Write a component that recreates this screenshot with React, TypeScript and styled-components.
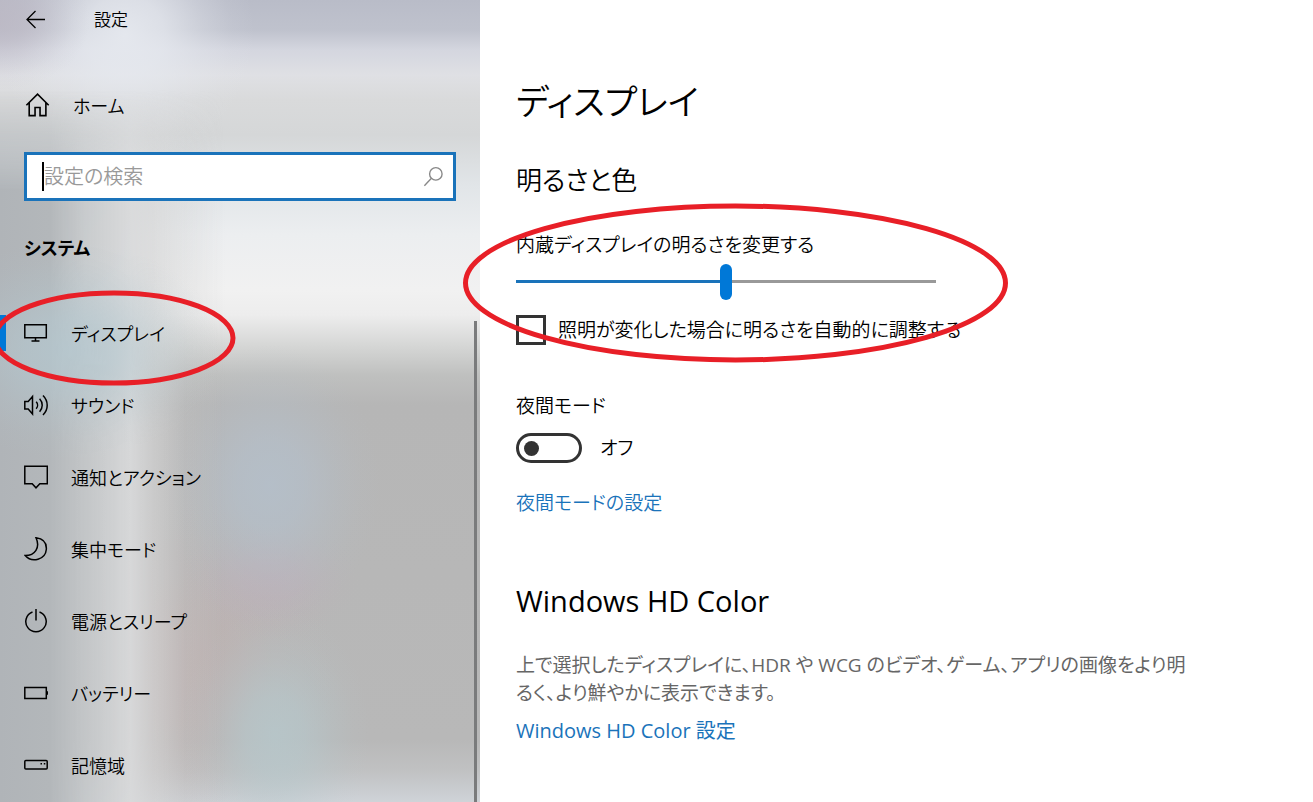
import React from "react";
import styled, { createGlobalStyle } from "styled-components";

const GlobalStyle = createGlobalStyle`
  *, *::before, *::after { box-sizing: border-box; }
  body {
    margin: 0;
    background: #fff;
    color: #000;
    font-family: "Open Sans", "Noto Sans CJK JP", sans-serif;
    font-size: 19px;
    font-weight: 350;
    line-height: 28px;
    font-feature-settings: "palt";
  }
  h1, h2, p { margin: 0; font-weight: inherit; }
  button, input { font: inherit; font-feature-settings: inherit; color: inherit; }
`;

const Window = styled.div`
  position: relative;
  display: flex;
  min-height: 100vh;
  overflow: hidden;
`;

const glow = (shape: string, rgb: string, alpha: number) =>
  `radial-gradient(ellipse ${shape}, rgba(${rgb}, ${alpha}), rgba(${rgb}, ${alpha * 0.8}) 30%, rgba(${rgb}, ${alpha * 0.35}) 60%, rgba(${rgb}, ${alpha * 0.1}) 82%, rgba(${rgb}, 0))`;

const Sidebar = styled.aside`
  position: relative;
  isolation: isolate;
  flex: 0 0 480px;
  display: flex;
  flex-direction: column;
  background:
    ${glow("110px 140px at 270px 485px", "180, 192, 204", 0.8)},
    ${glow("90px 60px at 270px 580px", "190, 174, 184", 0.6)},
    ${glow("95px 130px at 275px 735px", "182, 200, 204", 0.8)},
    ${glow("140px 170px at 195px 670px", "190, 177, 176", 0.8)},
    ${glow("90px 70px at 0px 20px", "188, 184, 196", 0.8)},
    ${glow("130px 130px at 125px 35px", "230, 233, 239", 0.95)},
    linear-gradient(
      #b9bcc8 0, #bfc2cd 30px, #d4d6df 50px, #dfe0e4 75px, #d9dadb 100px,
      #d5d7d8 135px, #e1e5e8 185px, #eceef0 235px, #f1f1f1 290px, #ededed 315px,
      #d6d7d6 345px, #bfc0bf 375px, #b6b6b6 405px, #b8b8b8 740px, #c0c1c2 770px, #cfd3d8 802px
    );

  &::before {
    content: "";
    position: absolute;
    inset: 0;
    z-index: -1;
    background:
      ${glow("150px 110px at 70px 350px", "180, 200, 208", 0.75)},
      linear-gradient(90deg, #b0b4b8 0, #b3b7ba 50px, rgba(196, 199, 201, 0.9) 85px, rgba(216, 217, 218, 0.95) 130px, rgba(212, 212, 212, 0.65) 155px, rgba(200, 200, 200, 0.25) 185px, rgba(195, 195, 195, 0) 225px);
    mask-image: linear-gradient(transparent 90px, #000 190px);
  }
`;

const TitleBar = styled.header`
  display: flex;
  align-items: center;
  height: 40px;
  padding-left: 24px;
  gap: 46px;
  font-size: 17px;
`;

const IconButton = styled.button`
  display: flex;
  padding: 0;
  border: 0;
  background: none;
`;

const NavLink = styled.a<{ $current?: boolean }>`
  position: relative;
  display: flex;
  align-items: center;
  gap: 23px;
  height: 72px;
  padding-left: 24px;
  color: #000;
  font-size: 18px;
  text-decoration: none;

  &::before {
    content: "";
    position: absolute;
    left: 0;
    width: 6px;
    height: 36px;
    background: ${(p) => (p.$current ? "#0078d7" : "transparent")};
  }
`;

const NavLabel = styled.span`
  padding-top: 2px;
`;

const HomeArea = styled.div`
  padding: 29px 0 11px;
`;

const SearchBox = styled.label`
  display: flex;
  align-items: center;
  height: 49px;
  margin: 0 24px;
  padding: 0 8px 0 15px;
  border: 3px solid #1a73ba;
  background: #fff;
`;

const Caret = styled.span`
  flex: none;
  width: 2px;
  height: 29px;
  background: #000;
`;

const SearchInput = styled.input`
  flex: 1;
  min-width: 0;
  height: 28px;
  padding: 0;
  border: 0;
  outline: 0;
  background: none;
  font-size: 20px;

  &::placeholder { color: #999; opacity: 1; }
`;

const GroupTitle = styled.h2`
  padding: 33px 24px 35px;
  font-size: 18px;
  font-weight: 700;
`;

const NavList = styled.nav`
  display: flex;
  flex-direction: column;
`;

const ScrollThumb = styled.div`
  position: absolute;
  top: 321px;
  right: 3px;
  bottom: 0;
  width: 3px;
  background: #7a7b7c;
`;

const Main = styled.main`
  flex: 1;
  min-width: 0;
  padding: 72px 36px 36px;
`;

const PageTitle = styled.h1`
  font-size: 35px;
  line-height: 60px;
`;

const SectionTitle = styled.h2<{ $top: number; $latin?: boolean }>`
  padding-top: ${(p) => p.$top}px;
  font-size: ${(p) => (p.$latin ? 29 : 26)}px;
  font-weight: ${(p) => (p.$latin ? 400 : 350)};
  line-height: 40px;
`;

const Field = styled.div<{ $top: number }>`
  display: flex;
  flex-direction: column;
  align-items: flex-start;
  padding-top: ${(p) => p.$top}px;
`;

const Slider = styled.input`
  appearance: none;
  width: 420px;
  max-width: 100%;
  height: 36px;
  margin: 5px 0 0;
  background: linear-gradient(90deg, #1a73ba 50%, #999 50%) 0 16px / 100% 3px no-repeat;

  &::-webkit-slider-thumb {
    appearance: none;
    width: 12px;
    height: 36px;
    border-radius: 6px;
    background: #0078d7;
  }
`;

const CheckRow = styled.div`
  display: flex;
  align-items: center;
  gap: 12px;
  padding-top: 15px;
`;

const CheckBox = styled.input`
  appearance: none;
  flex: none;
  width: 30px;
  height: 30px;
  margin: 0;
  border: 3px solid #333;
  background: #fff;
`;

const SwitchRow = styled.div`
  display: flex;
  align-items: center;
  gap: 18px;
  padding-top: 13px;
`;

const Switch = styled.input`
  appearance: none;
  display: flex;
  align-items: center;
  width: 66px;
  height: 30px;
  margin: 0;
  padding: 0 5px;
  border: 3px solid #333;
  border-radius: 15px;

  &::before {
    content: "";
    width: 15px;
    height: 15px;
    border-radius: 50%;
    background: #333;
  }
`;

const TextLink = styled.a<{ $latin?: boolean }>`
  color: #1a73ba;
  font-size: ${(p) => (p.$latin ? 20 : 19)}px;
  font-weight: ${(p) => (p.$latin ? 400 : 350)};
  text-decoration: none;
`;

const LinkLine = styled.p<{ $top: number }>`
  padding-top: ${(p) => p.$top}px;
`;

const Description = styled.p`
  max-width: 676px;
  padding-top: 30px;
  color: #666;
  font-weight: 400;
`;

const Marks = styled.svg`
  position: absolute;
  top: 0;
  left: 0;
  width: 1010px;
  height: 400px;
  pointer-events: none;
`;

const Glyph = styled.svg`
  flex: none;
  fill: none;
  stroke: currentColor;
  stroke-width: 1.5;
`;

type IconProps = { children: React.ReactNode; size?: number };
const Icon = ({ children, size = 24 }: IconProps) => (
  <Glyph width={size} height={size} viewBox="0 0 24 24" aria-hidden="true">
    {children}
  </Glyph>
);

const items: { label: string; icon: React.ReactNode }[] = [
  {
    label: "ディスプレイ",
    icon: <path d="M.8 3.8h21.5v13H.8zM11.5 17v3M7.5 20h8" />,
  },
  {
    label: "サウンド",
    icon: (
      <path d="M.8 8.500h3.400L8.500 3.500v17.500l-4.300-5H.8zM12.200 8.800c1.800 2 1.800 5 0 7M15.600 5.800c3.500 3.800 3.500 9.200 0 13M19 2.500c5.600 5.600 5.600 14 0 19.500" />
    ),
  },
  {
    label: "通知とアクション",
    icon: <path d="M.8 1.200h22.500v17.500h-7.500L12 22.800l-3.800-4.100H.8z" />,
  },
  {
    label: "集中モード",
    icon: (
      <path d="M12 .8C19.500 1.800 22.800 6.500 22.300 12.500 21.500 22.500 8 26.500 1.200 18.500 11 18.500 16.500 10.500 12 .8z" />
    ),
  },
  {
    label: "電源とスリープ",
    icon: <path d="M12 0v11.500M8.500 3A10.200 10.200 0 1 0 15.500 3" />,
  },
  {
    label: "バッテリー",
    icon: (
      <>
        <path d="M.8 6.500h21.500v11H.8z" />
        <path d="M23.200 10.200v3.600" strokeWidth="1.600" />
      </>
    ),
  },
  {
    label: "記憶域",
    icon: (
      <>
        <rect x=".8" y="7.500" width="22.400" height="8.500" rx="1" />
        <path d="M16.500 10.700h1.500M19.800 10.700h1.500" />
      </>
    ),
  },
];

export default function App() {
  return (
    <Window>
      <GlobalStyle />
      <Sidebar>
        <TitleBar>
          <IconButton type="button" aria-label="戻る">
            <Icon>
              <path d="M3 11.500h18M11.500 3L3 11.500l8.500 8.500" strokeWidth="1.300" />
            </Icon>
          </IconButton>
          <span>設定</span>
        </TitleBar>
        <HomeArea>
          <NavLink href="#home">
            <Icon size={26}>
              <path d="M2.200 12.200L12.500 2l10.300 10.200M4.800 10v11.800h5.400v-7.500h4.600v7.500h5.400V10" />
            </Icon>
            <NavLabel>ホーム</NavLabel>
          </NavLink>
        </HomeArea>
        <SearchBox>
          <Caret />
          <SearchInput type="text" placeholder="設定の検索" aria-label="設定の検索" />
          <Icon size={22}>
            <path
              d="M14 1.800a6.800 6.800 0 1 1 0 13.600 6.800 6.800 0 0 1 0-13.600M9.200 13.400L1.500 21.500"
              stroke="#888"
            />
          </Icon>
        </SearchBox>
        <GroupTitle>システム</GroupTitle>
        <NavList aria-label="システム">
          {items.map((item, i) => (
            <NavLink key={item.label} href={`#item-${i}`} $current={i === 0}>
              <Icon>{item.icon}</Icon>
              <NavLabel>{item.label}</NavLabel>
            </NavLink>
          ))}
        </NavList>
        <ScrollThumb />
      </Sidebar>
      <Main>
        <PageTitle>ディスプレイ</PageTitle>
        <SectionTitle $top={28}>明るさと色</SectionTitle>
        <Field $top={31}>
          <label htmlFor="brightness">内蔵ディスプレイの明るさを変更する</label>
          <Slider id="brightness" type="range" min="0" max="100" defaultValue="50" />
        </Field>
        <CheckRow>
          <CheckBox id="auto" type="checkbox" />
          <label htmlFor="auto">照明が変化した場合に明るさを自動的に調整する</label>
        </CheckRow>
        <Field $top={47}>
          <label htmlFor="night">夜間モード</label>
          <SwitchRow>
            <Switch id="night" type="checkbox" role="switch" />
            <span>オフ</span>
          </SwitchRow>
        </Field>
        <LinkLine $top={26}>
          <TextLink href="#night">夜間モードの設定</TextLink>
        </LinkLine>
        <SectionTitle $top={64} $latin>Windows HD Color</SectionTitle>
        <Description>
          上で選択したディスプレイに、HDR や WCG のビデオ、ゲーム、アプリの画像をより明るく、より鮮やかに表示できます。
        </Description>
        <LinkLine $top={10}>
          <TextLink href="#hd-color" $latin>Windows HD Color 設定</TextLink>
        </LinkLine>
      </Main>
      <Marks viewBox="0 0 1010 400" fill="none" stroke="#e81f27" strokeWidth="5" aria-hidden="true">
        <ellipse cx="114" cy="338" rx="119" ry="45" />
        <ellipse cx="735.5" cy="283" rx="270" ry="77" />
      </Marks>
    </Window>
  );
}
